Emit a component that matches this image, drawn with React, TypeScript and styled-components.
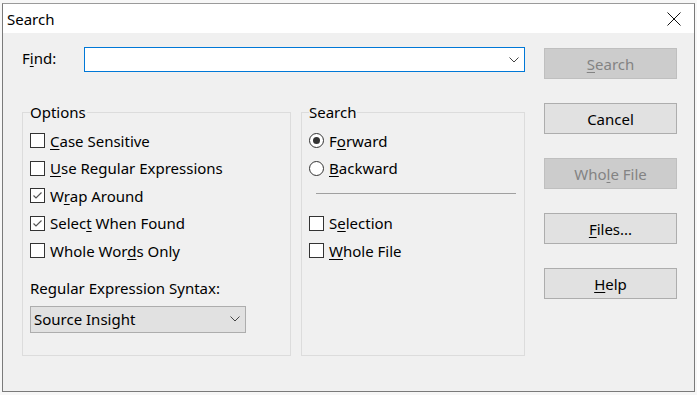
import React from 'react'
import styled, { createGlobalStyle } from 'styled-components'

const GlobalStyle = createGlobalStyle`
  html, body {
    margin: 0;
    padding: 0;
    background: #f7f7f7;
  }
  body {
    font-family: 'Noto Sans', 'Segoe UI', sans-serif;
    font-size: 15px;
    color: #000;
  }
`

const Window = styled.div`
  margin: 3px 0 0 2px;
  width: 693px;
  height: 389px;
  box-sizing: border-box;
  border: 1px solid #7a7a7a;
  border-top-color: #9a9a9a;
  background: #f0f0f0;
  display: flex;
  flex-direction: column;
`

const TitleBar = styled.div`
  height: 29px;
  background: #fff;
  display: flex;
  align-items: center;
  justify-content: space-between;
  padding: 0 13px 0 4px;
`

const Title = styled.span`
  font-size: 15px;
`

const CloseButton = styled.button`
  border: 0;
  padding: 0;
  background: none;
  width: 14px;
  height: 14px;
  display: flex;
`

const Body = styled.div`
  display: grid;
  grid-template-columns: 503px 133px;
  column-gap: 19px;
  padding: 14px 0 0 19px;
`

const LeftColumn = styled.div`
  display: flex;
  flex-direction: column;
`

const FindRow = styled.div`
  display: flex;
  align-items: center;
  height: 25px;
`

const FindLabel = styled.label`
  width: 62px;
  margin-top: -4px;
`

const ComboBox = styled.div`
  flex: 1;
  height: 25px;
  box-sizing: border-box;
  border: 1px solid #0078d7;
  background: #fff;
  display: flex;
  align-items: center;
  justify-content: flex-end;
  padding-right: 5px;
`

const Groups = styled.div`
  display: flex;
  gap: 10px;
  margin-top: 30px;
`

const Group = styled.fieldset<{ $width: number }>`
  margin: 0;
  padding: 5px 7px 0;
  width: ${p => p.$width}px;
  height: 254px;
  box-sizing: border-box;
  border: 1px solid #dcdcdc;
  min-width: 0;
  display: flex;
  flex-direction: column;
`

const Legend = styled.legend`
  padding: 0 1px 0 0;
  line-height: 20px;
`

const Row = styled.label`
  display: flex;
  align-items: center;
  gap: 5px;
  height: 27.5px;
`

const Box = styled.span`
  width: 15px;
  height: 15px;
  box-sizing: border-box;
  border: 1px solid #333;
  background: #fff;
  display: flex;
  align-items: center;
  justify-content: center;
  flex-shrink: 0;
`

const Radio = styled.span<{ $on?: boolean }>`
  width: 15px;
  height: 15px;
  box-sizing: border-box;
  border: 1px solid #333;
  border-radius: 50%;
  background: #fff;
  display: flex;
  align-items: center;
  justify-content: center;
  flex-shrink: 0;

  &::after {
    content: '';
    width: 7px;
    height: 7px;
    border-radius: 50%;
    background: ${p => (p.$on ? '#333' : 'transparent')};
  }
`

const Key = styled.span`
  text-decoration: underline;
  text-underline-offset: 2px;
  text-decoration-thickness: 1px;
`

const SyntaxLabel = styled.div`
  margin-top: 13px;
  line-height: 20px;
`

const Select = styled.div`
  margin-top: 8px;
  width: 216px;
  height: 27px;
  box-sizing: border-box;
  border: 1px solid #adadad;
  background: #e1e1e1;
  display: flex;
  align-items: center;
  justify-content: space-between;
  padding: 0 5px 0 3px;
`

const Separator = styled.div`
  height: 27.5px;
  display: flex;
  align-items: flex-start;
  padding: 11px 1px 0 7px;
  box-sizing: border-box;

  &::before {
    content: '';
    flex: 1;
    height: 1px;
    background: #a0a0a0;
  }
`

const ButtonColumn = styled.div`
  display: flex;
  flex-direction: column;
  gap: 24px;
  margin-top: 1px;
`

const Button = styled.button<{ $disabled?: boolean }>`
  height: 31px;
  width: 133px;
  box-sizing: border-box;
  font-family: inherit;
  font-size: 15px;
  padding: 0;
  border: 1px solid ${p => (p.$disabled ? '#bfbfbf' : '#adadad')};
  background: ${p => (p.$disabled ? '#cccccc' : '#e1e1e1')};
  color: ${p => (p.$disabled ? '#838383' : '#000')};
`

const Chevron = () => (
  <svg width='10' height='6' viewBox='0 0 10 6'>
    <polyline points='0.5,0.5 5,5 9.5,0.5' fill='none' stroke='#444' strokeWidth='1' />
  </svg>
)

const Check = () => (
  <svg width='13' height='13' viewBox='0 0 13 13'>
    <polyline points='2.5,6.5 5,9 10.5,3.5' fill='none' stroke='#555' strokeWidth='1.2' />
  </svg>
)

const CheckRow = ({ checked, children }: { checked?: boolean; children: React.ReactNode }) => (
  <Row>
    <Box>{checked && <Check />}</Box>
    <span>{children}</span>
  </Row>
)

const RadioRow = ({ on, children }: { on?: boolean; children: React.ReactNode }) => (
  <Row>
    <Radio $on={on} />
    <span>{children}</span>
  </Row>
)

const App: React.FC = () => {
  return (
    <>
      <GlobalStyle />
      <Window>
        <TitleBar>
          <Title>Search</Title>
          <CloseButton aria-label='Close'>
            <svg width='14' height='14' viewBox='0 0 14 14'>
              <path d='M0.5 0.5 L13.5 13.5 M13.5 0.5 L0.5 13.5' stroke='#111' strokeWidth='1' />
            </svg>
          </CloseButton>
        </TitleBar>

        <Body>
          <LeftColumn>
            <FindRow>
              <FindLabel>
                F<Key>i</Key>nd:
              </FindLabel>
              <ComboBox>
                <Chevron />
              </ComboBox>
            </FindRow>

            <Groups>
              <Group $width={269}>
                <Legend>Options</Legend>
                <CheckRow>
                  <Key>C</Key>ase Sensitive
                </CheckRow>
                <CheckRow>
                  <Key>U</Key>se Regular Expressions
                </CheckRow>
                <CheckRow checked>
                  W<Key>r</Key>ap Around
                </CheckRow>
                <CheckRow checked>
                  Selec<Key>t</Key> When Found
                </CheckRow>
                <CheckRow>
                  Whole Wor<Key>d</Key>s Only
                </CheckRow>
                <SyntaxLabel>Regular Expression Syntax:</SyntaxLabel>
                <Select>
                  <span>Source Insight</span>
                  <Chevron />
                </Select>
              </Group>

              <Group $width={224}>
                <Legend>Search</Legend>
                <RadioRow on>
                  F<Key>o</Key>rward
                </RadioRow>
                <RadioRow>
                  <Key>B</Key>ackward
                </RadioRow>
                <Separator />
                <CheckRow>
                  S<Key>e</Key>lection
                </CheckRow>
                <CheckRow>
                  <Key>W</Key>hole File
                </CheckRow>
              </Group>
            </Groups>
          </LeftColumn>

          <ButtonColumn>
            <Button $disabled>
              <Key>S</Key>earch
            </Button>
            <Button>Cancel</Button>
            <Button $disabled>
              Who<Key>l</Key>e File
            </Button>
            <Button>
              <Key>F</Key>iles...
            </Button>
            <Button>
              <Key>H</Key>elp
            </Button>
          </ButtonColumn>
        </Body>
      </Window>
    </>
  )
}

export default App
